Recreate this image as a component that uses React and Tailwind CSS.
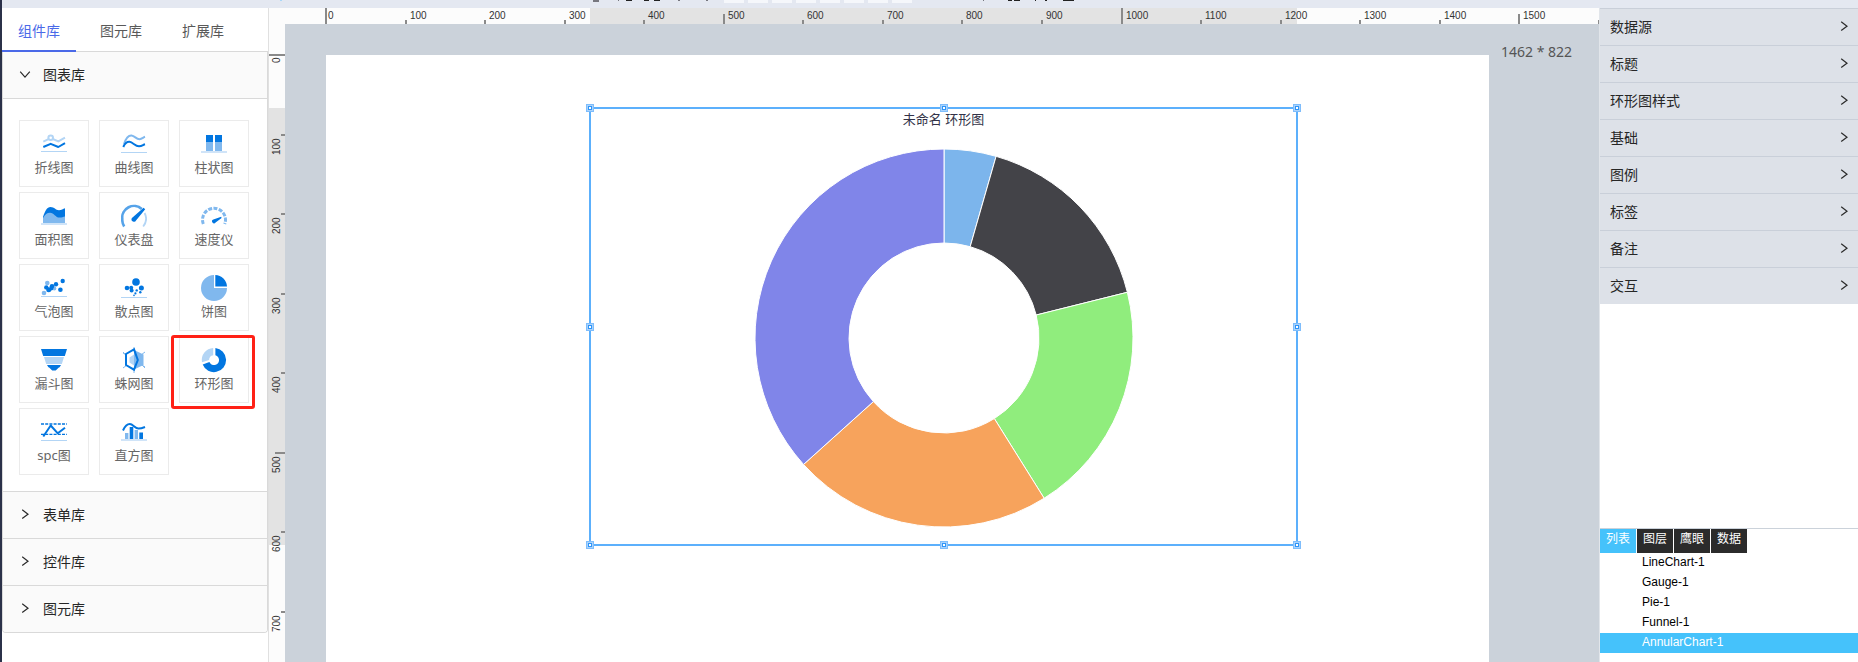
import React, { useState } from "react";

const BLUE = "#0276e0";
const MID = "#80b8ee";
const PALE = "#b3d5f5";
const BASE = "#d0e4f8";

const line = { fill: "none", strokeWidth: 2, strokeLinejoin: "round" };

const icons = {
  line: (
    <>
      <path d="M2.3 10.7 7.5 8.2M11.8 8 17.3 10.4 24 6.6" stroke={PALE} {...line} />
      <circle cx="9.7" cy="6.8" r="2.3" stroke={PALE} {...line} />
      <path d="M2.3 16 9.7 12.8 17.3 16 24 12.2" stroke={BLUE} {...line} />
      <rect y="20" width="26" height="1" fill={PALE} />
    </>
  ),
  curve: (
    <>
      <path d="M3 13C5 7 8 4.3 10.5 4.5C14 5 15 8.2 18.5 8.2C21 8 22 6.5 24 5.8" stroke={MID} {...line} />
      <path d="M2.3 16C4 12 6 10.6 8.5 10.8C12 11.2 14 15.3 18 15.3C21 15.2 22 13.8 24 13.2" stroke={BLUE} {...line} />
      <rect y="21" width="26" height="1" fill={PALE} />
    </>
  ),
  bar: (
    <>
      <path d="M5 4h7v16H5zM14 4h7v16h-7z" fill={MID} />
      <path d="M5 4h7v7H5zM14 4h7v7h-7z" fill={BLUE} />
      <rect y="20" width="26" height="2" fill={BASE} />
    </>
  ),
  area: (
    <>
      <path d="M2 14C4 8 6 4 9.5 4C13.5 4 14.5 7.2 18 7.2C20.5 7.2 22 6 24 5.3V19.5H2Z" fill={BLUE} />
      <path d="M2 15C4 11.5 6 9.7 9 9.7C13 9.8 14.5 14.6 18.5 14.6C21 14.6 22 13.8 24 13.4V19.5H2Z" fill={MID} />
      <rect y="20" width="26" height="2" fill={BASE} />
    </>
  ),
  gauge: (
    <>
      <path d="M3.2 23.5A12 12 0 0 1 1.3 16A11.7 11.7 0 0 1 20.8 6" fill="none" stroke="#56a3e9" strokeWidth="2.6" />
      <path d="M23.6 10A12.5 12.5 0 0 1 22.2 23.5" fill="none" stroke={PALE} strokeWidth="1.8" />
      <path d="M22.6 4.8 24.2 6.2 15 17.4A2.4 2.4 0 1 1 11.8 14.2Z" fill={BLUE} />
    </>
  ),
  speed: (
    <>
      <path d="M2.3 21A11.5 11.5 0 1 1 23.7 21" fill="none" stroke={MID} strokeWidth="3" strokeDasharray="4 1.4" />
      <path d="M20.2 13.8 20.6 15 14.6 19.6A2 2 0 1 1 12.4 16.4Z" fill={BLUE} />
    </>
  ),
  bubble: (
    <>
      <g fill={MID}>
        <circle cx="6.3" cy="8" r="2.3" />
        <circle cx="13.3" cy="13.5" r="2" />
        <circle cx="3" cy="18" r="2.3" />
      </g>
      <g fill={BLUE}>
        <circle cx="21.7" cy="6" r="2.2" />
        <circle cx="15" cy="9.2" r="2.2" />
        <circle cx="11" cy="11.3" r="2.3" />
        <circle cx="19.4" cy="14.7" r="2.3" />
        <circle cx="5.3" cy="12.4" r="2.2" />
        <circle cx="7.7" cy="14.7" r="2.5" />
        <circle cx="10.3" cy="13.4" r="2" />
      </g>
      <rect y="21" width="26" height="1" fill={PALE} />
    </>
  ),
  scatter: (
    <>
      <g fill={BLUE}>
        <circle cx="15" cy="7" r="3.8" />
        <circle cx="6" cy="13" r="2.3" />
        <circle cx="10.2" cy="12.8" r="2" />
        <circle cx="10.6" cy="15.4" r="2" />
        <circle cx="20.4" cy="13" r="2.5" />
        <circle cx="15.7" cy="15.4" r="1.2" />
        <circle cx="19.3" cy="17.3" r="1.2" />
        <circle cx="14.4" cy="18.4" r="1.1" />
        <circle cx="13" cy="20.4" r="0.8" />
      </g>
      <rect y="22" width="26" height="1" fill={PALE} />
    </>
  ),
  pie: (
    <>
      <path d="M13 0A13 13 0 1 0 26 13H13Z" fill={MID} />
      <path d="M14.3 0A12 12 0 0 1 26 11.4H14.3Z" fill={BLUE} />
    </>
  ),
  funnel: (
    <>
      <path d="M0 2H26L23.8 9H2.2Z" fill={BLUE} />
      <path d="M3 10H23L20.8 17H5.2Z" fill={PALE} />
      <path d="M6 18H20L18.6 20.2C16.6 20.6 16 23.5 14 23.5H12C10 23.5 9.4 20.6 7.4 20.2Z" fill={BLUE} />
    </>
  ),
  radar: (
    <>
      <path d="M13 0V26M2 6 24 20M24 5 2 21M2 5 5 8M21 18 24 21" stroke={MID} strokeWidth="1" />
      <path d="M13 3 22.5 7.5V18L13 22.6Z" fill={MID} />
      <path d="M13 2.3 5 7V18L13 22.7V2.3Z" fill="#fff" />
      <path d="M13 7.5 8.5 10.5V15.5L13 18.5Z" fill={PALE} />
      <path d="M13 2.3 5 7V18L13 22.7 16.8 13Z" fill="none" stroke={BLUE} strokeWidth="2" />
    </>
  ),
  ring: (
    <>
      <path d="M14.4 1A12.1 12.1 0 1 1 1.7 17.4L8.4 15A5 5 0 1 0 14.4 8.3Z" fill={BLUE} />
      <path d="M12.2 1V8.2A5 5 0 0 0 8.1 13L1 15.2A12 12 0 0 1 12.2 1Z" fill={PALE} />
    </>
  ),
  spc: (
    <>
      <path d="M0 5H26M0 15.4H26" stroke={BLUE} strokeWidth="1.4" strokeDasharray="3 1.2" />
      <path d="M2.3 17.5 9.7 6.5 16.8 14.3 24 8.7" stroke={BLUE} {...line} />
      <rect y="21" width="26" height="1" fill={PALE} />
    </>
  ),
  histogram: (
    <>
      <path d="M2 11.5C4 7 6 5 8.8 5C12 5 14 9.6 17.5 9.6C20 9.6 22 8.8 24 8" stroke={BLUE} {...line} />
      <path d="M4 14h3.4v6H4zM13.6 11H17v9h-3.4z" fill={MID} />
      <path d="M8.7 8h3.6v12H8.7zM18.3 13.4H22V20h-3.7z" fill={BLUE} />
      <rect y="20" width="26" height="2" fill={BASE} />
    </>
  ),
};

const charts = [
  ["line", "折线图"],
  ["curve", "曲线图"],
  ["bar", "柱状图"],
  ["area", "面积图"],
  ["gauge", "仪表盘"],
  ["speed", "速度仪"],
  ["bubble", "气泡图"],
  ["scatter", "散点图"],
  ["pie", "饼图"],
  ["funnel", "漏斗图"],
  ["radar", "蛛网图"],
  ["ring", "环形图"],
  ["spc", "spc图"],
  ["histogram", "直方图"],
];

const SCALE = 0.7955;

function Chevron({ open }) {
  return (
    <svg width="12" height="12" viewBox="0 0 12 12" fill="none" stroke="#2a2a2a" strokeWidth="1.2" aria-hidden="true">
      <path d={open ? "M1.2 2.6 6 8.2 10.8 2.6" : "M3.2 0.8 9 5.2 3.2 9.6"} />
    </svg>
  );
}

function ChartTile({ icon, label }) {
  return (
    <button type="button" className="relative flex h-[67px] flex-col items-center border border-[#ebebeb] bg-white pt-2.5 text-[13px] text-[#666]">
      <svg className="shrink-0" width="26" height="26" viewBox="0 0 26 26" aria-hidden="true">
        {icons[icon]}
      </svg>
      <span className="leading-5">{label}</span>
      {icon === "ring" && (
        <span className="pointer-events-none absolute -top-0.5 right-[-7px] bottom-[-7px] left-[-9px] rounded-[3px] border-3 border-[#ff2116]" />
      )}
    </button>
  );
}

function Section({ title, open, children }) {
  return (
    <section className="border-b border-[#d9d9d9] last:rounded-b last:border-b-0">
      <button
        type="button"
        aria-expanded={!!open}
        className="flex h-[46px] w-full items-center gap-3 bg-[#fafafa] pl-4 text-sm text-[#262626]"
      >
        <Chevron open={open} />
        {title}
      </button>
      {children}
    </section>
  );
}

function Ruler({ vertical, origin, from, size, count }) {
  const ticks = Array.from({ length: count + 1 }, (_, i) => i);
  return (
    <svg className="block h-full w-full bg-[#fcfcfc]" aria-hidden="true">
      {vertical ? (
        <rect x="0" y={from} width="16" height={size} fill="#e3e3e3" />
      ) : (
        <rect x={from} y="0" width={size} height="16" fill="#e3e3e3" />
      )}
      {ticks.map((i) => {
        const at = Math.round(origin + i * 100 * SCALE);
        const len = i % 10 === 0 ? 16 : i % 5 === 0 ? 10 : 4;
        return vertical ? (
          <g key={i}>
            <rect x={16 - len} y={at - 1} width={len} height="2" fill="#8a8a8a" />
            {i < count && (
              <text transform={`translate(11 ${at + (i ? 20 : 8)}) rotate(-90)`} fontSize="10" fill="#333">
                {i * 100}
              </text>
            )}
          </g>
        ) : (
          <g key={i}>
            <rect x={at - 1} y={16 - len} width="2" height={len} fill="#8a8a8a" />
            {i < count && (
              <text x={at + (i ? 4 : 2)} y="11" fontSize="10" fill="#333">
                {i * 100}
              </text>
            )}
          </g>
        );
      })}
    </svg>
  );
}

const slices = [
  [0, 16, "#7cb5ec"],
  [16, 76, "#434348"],
  [76, 148, "#90ed7d"],
  [148, 228, "#f7a35c"],
  [228, 360, "#8085e9"],
];

function arc(a, b, R, r) {
  const p = (deg, rad) => {
    const t = (deg * Math.PI) / 180;
    return `${190 + rad * Math.sin(t)} ${190 - rad * Math.cos(t)}`;
  };
  return `M${p(a, R)}A${R} ${R} 0 0 1 ${p(b, R)}L${p(b, r)}A${r} ${r} 0 0 0 ${p(a, r)}Z`;
}

function Handle({ place }) {
  return (
    <span className={`absolute flex size-2 items-center justify-center border border-[#7fbdfb] bg-[#a9d3fd] ${place}`}>
      <span className="size-1 border border-[#2f95f8] bg-white" />
    </span>
  );
}

function Annular() {
  return (
    <div className="absolute top-[52px] left-[263px] flex h-[439px] w-[709px] flex-col items-center border-2 border-[#5cb0fc]">
      <h2 className="text-[13px] leading-5 text-[#333348]">未命名 环形图</h2>
      <svg className="mt-[19px] shrink-0" width="380" height="380" viewBox="0 0 380 380" role="img" aria-label="环形图">
        {slices.map(([a, b, fill]) => (
          <path key={fill} d={arc(a, b, 189, 95)} fill={fill} stroke="#fff" strokeWidth="1" strokeLinejoin="round" />
        ))}
      </svg>
      <Handle place="-top-[5px] -left-[5px]" />
      <Handle place="-top-[5px] left-1/2 -translate-x-1/2" />
      <Handle place="-top-[5px] -right-[5px]" />
      <Handle place="top-1/2 -left-[5px] -translate-y-1/2" />
      <Handle place="top-1/2 -right-[5px] -translate-y-1/2" />
      <Handle place="-bottom-[5px] -left-[5px]" />
      <Handle place="-bottom-[5px] left-1/2 -translate-x-1/2" />
      <Handle place="-bottom-[5px] -right-[5px]" />
    </div>
  );
}

function Toolbar() {
  return (
    <header className="h-2 shrink-0 bg-[#e4e8f1]">
      <svg className="block h-2 w-full" aria-hidden="true">
        <path d="M591 0h6v2h-6zM616 0h1v1h-1zM676 0h2v1h-2zM704 0h2v1h-2zM981 0h1v1h-1z" fill="#77777f" />
        <path d="M624 0h6v1h-6zM642 0h5v1h-5zM652 0h6v1h-6zM1006 0h4v1h-4zM1012 0h6v1h-6zM1033 0h1v1h-1zM1043 0h2v1h-2zM1061 0h11v1h-11z" fill="#222" />
        <path d="M722 0h20v3h-20zM746 0h20v3h-20zM770 0h20v3h-20zM794 0h20v3h-20zM818 0h20v3h-20zM842 0h20v3h-20zM866 0h20v3h-20zM890 0h20v3h-20z" fill="#f5f7fb" />
        <path d="M278 0h2v1h-2z" fill="#a9d8f8" />
      </svg>
    </header>
  );
}

export default function App() {
  const [selected, setSelected] = useState("AnnularChart-1");
  return (
    <div className="flex h-screen overflow-hidden bg-white font-['Noto_Sans','Noto_Sans_CJK_SC',sans-serif]">
      <div className="w-0.5 shrink-0 bg-[#2b3149]" />
      <div className="flex min-w-0 flex-1 flex-col">
        <Toolbar />
        <div className="flex min-h-0 flex-1">
          <aside className="w-[267px] shrink-0 border-r border-[#e0e0e0] bg-white">
            <div role="tablist" className="flex h-11 gap-2 border-b border-[#d9d9d9] text-sm text-[#595959]">
              <button type="button" role="tab" aria-selected="true" className="-mb-px border-b-2 border-[#4a69e8] px-4 pt-1 text-[#4a69e8]">
                组件库
              </button>
              <button type="button" role="tab" aria-selected="false" className="px-4 pt-0.5">
                图元库
              </button>
              <button type="button" role="tab" aria-selected="false" className="px-4 pt-0.5">
                扩展库
              </button>
            </div>
            <div className="overflow-hidden rounded-b border border-t-0 border-[#d9d9d9]">
              <Section title="图表库" open>
                <div className="grid grid-cols-[repeat(3,70px)] gap-x-2.5 gap-y-[5px] border-t border-[#d9d9d9] px-4 pt-[21px] pb-4">
                  {charts.map(([icon, label]) => (
                    <ChartTile key={icon} icon={icon} label={label} />
                  ))}
                </div>
              </Section>
              <Section title="表单库" />
              <Section title="控件库" />
              <Section title="图元库" />
            </div>
          </aside>

          <main className="grid min-w-0 flex-1 grid-cols-[16px_minmax(0,1fr)] grid-rows-[16px_minmax(0,1fr)] overflow-hidden bg-[#cbd2da]">
            <div className="bg-[#fcfcfc]" />
            <div className="font-['Liberation_Sans',sans-serif]">
              <Ruler origin={41} from={305} size={707} count={16} />
            </div>
            <div className="font-['Liberation_Sans',sans-serif]">
              <Ruler vertical origin={31} from={84} size={437} count={8} />
            </div>
            <div className="flex overflow-hidden pt-[31px] pl-[41px]">
              <div className="relative min-w-0 flex-1 bg-white">
                <Annular />
              </div>
              <p className="-mt-[15px] w-[110px] shrink-0 pl-3 text-sm leading-6 text-[#555]">1462 * 822</p>
            </div>
          </main>

          <aside className="flex w-[259px] shrink-0 flex-col border-l border-[#e1e5ea] bg-white">
            <div>
              {["数据源", "标题", "环形图样式", "基础", "图例", "标签", "备注", "交互"].map((name) => (
                <button
                  key={name}
                  type="button"
                  className="flex h-[37px] w-full items-center justify-between border-t border-[#c9cfd9] bg-[#dde1e8] pr-2 pl-2.5 text-sm text-[#262626]"
                >
                  {name}
                  <Chevron />
                </button>
              ))}
            </div>
            <div className="mt-auto h-[134px] border-t border-[#cbd2da]">
              <div role="tablist" className="flex gap-px text-xs text-white">
                {["列表", "图层", "鹰眼", "数据"].map((name, i) => (
                  <button
                    key={name}
                    type="button"
                    role="tab"
                    aria-selected={i === 0}
                    className={`h-6 w-9 pb-1 ${i === 0 ? "bg-[#45c2fb]" : "bg-[#2b2b2b]"}`}
                  >
                    {name}
                  </button>
                ))}
              </div>
              <ul className="font-['Liberation_Sans',sans-serif] text-xs">
                {["LineChart-1", "Gauge-1", "Pie-1", "Funnel-1", "AnnularChart-1"].map((name) => (
                  <li key={name}>
                    <button
                      type="button"
                      onClick={() => setSelected(name)}
                      className={`flex h-5 w-full items-start pl-[42px] leading-[18px] ${
                        selected === name ? "bg-[#45c2fb] text-white" : "text-black"
                      }`}
                    >
                      {name}
                    </button>
                  </li>
                ))}
              </ul>
            </div>
          </aside>
        </div>
      </div>
    </div>
  );
}
